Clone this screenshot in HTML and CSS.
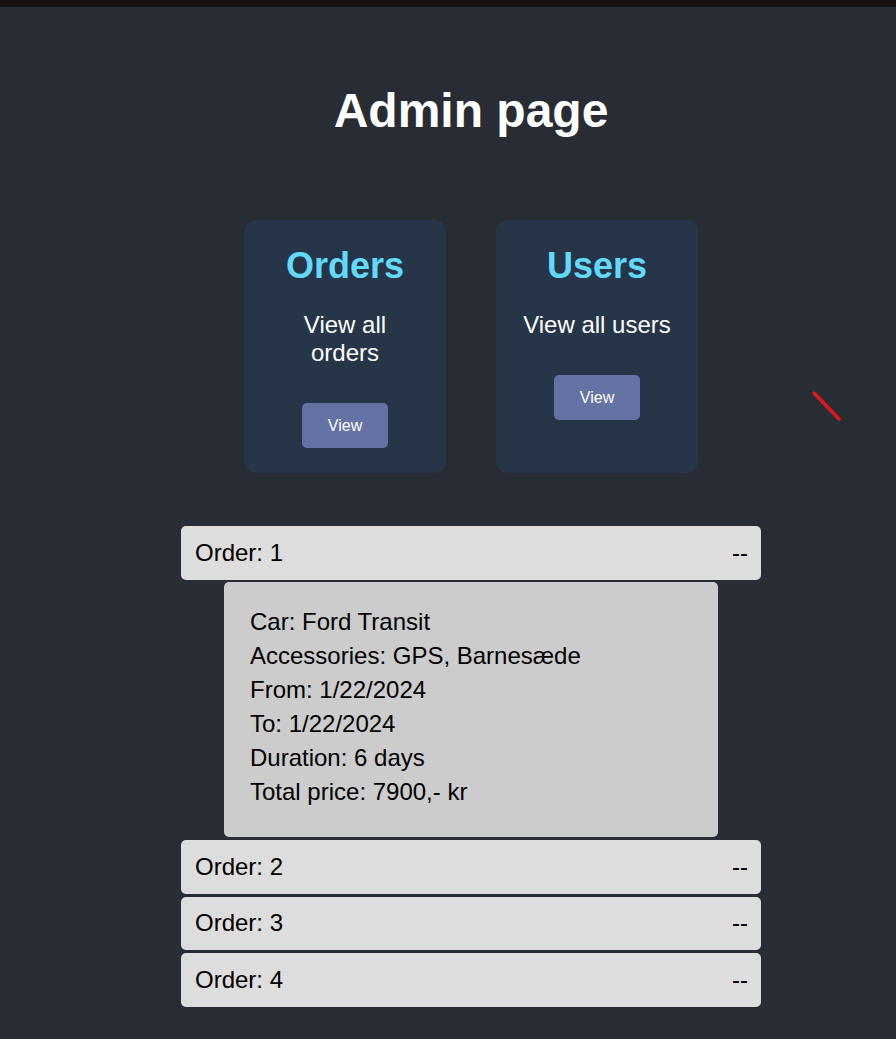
FILE: index.html
```html
<!DOCTYPE html>
<html lang="en">
<head>
<meta charset="utf-8">
<title>Admin page</title>
<link rel="stylesheet" href="styles.css">
</head>
<body>
<div class="topbar"></div>
<main class="page">
  <h1 class="title">Admin page</h1>
  <section class="cards">
    <div class="card">
      <h2 class="card-title">Orders</h2>
      <p class="card-text">View all orders</p>
      <button class="btn">View</button>
    </div>
    <div class="card">
      <h2 class="card-title">Users</h2>
      <p class="card-text">View all users</p>
      <button class="btn">View</button>
    </div>
  </section>
  <section class="orders">
    <div class="order-row"><span>Order: 1</span><span>--</span></div>
    <div class="order-details">
      <div>Car: Ford Transit</div>
      <div>Accessories: GPS, Barnesæde</div>
      <div>From: 1/22/2024</div>
      <div>To: 1/22/2024</div>
      <div>Duration: 6 days</div>
      <div>Total price: 7900,- kr</div>
    </div>
    <div class="order-row"><span>Order: 2</span><span>--</span></div>
    <div class="order-row"><span>Order: 3</span><span>--</span></div>
    <div class="order-row"><span>Order: 4</span><span>--</span></div>
  </section>
</main>
<svg class="marker" width="36" height="36" viewBox="0 0 36 36"><line x1="5" y1="5" x2="30" y2="31" stroke="#e01818" stroke-width="3.5" stroke-linecap="round"/></svg>
</body>
</html>
```

FILE: styles.css
```css
html, body {
  margin: 0;
  padding: 0;
  background: #282c34;
  font-family: "Liberation Sans", Arial, sans-serif;
  min-height: 100%;
}
body {
  position: relative;
  overflow: hidden;
}
.topbar {
  height: 7px;
  background: #181212;
}
.page {
  padding-left: 46px;
  display: flex;
  flex-direction: column;
  align-items: center;
}
.title {
  margin: 76px 0 0;
  font-size: 48px;
  line-height: 55px;
  font-weight: bold;
  color: #ffffff;
}
.cards {
  margin-top: 82px;
  display: flex;
  gap: 50px;
}
.card {
  width: 202px;
  box-sizing: border-box;
  padding: 25px 24px 25px;
  background: #273549;
  border-radius: 12px;
  display: flex;
  flex-direction: column;
  align-items: center;
  text-align: center;
}
.card-title {
  margin: 0 0 25px;
  font-size: 36px;
  line-height: 41px;
  font-weight: bold;
  color: #61dafb;
}
.card-text {
  margin: 0 0 36px;
  font-size: 24px;
  line-height: 28px;
  color: #ffffff;
}
.btn {
  font-family: "Liberation Sans", Arial, sans-serif;
  font-size: 16px;
  line-height: 21px;
  color: #ffffff;
  background: #6572a4;
  border: none;
  border-radius: 5px;
  padding: 12px 25px;
  width: 86px;
  height: 45px;
}
.orders {
  margin-top: 53px;
  display: flex;
  flex-direction: column;
  align-items: center;
  gap: 3px;
}
.order-row {
  width: 580px;
  box-sizing: border-box;
  height: 53.6px;
  padding: 0 13px 0 14px;
  display: flex;
  align-items: center;
  justify-content: space-between;
  background: #dddddd;
  border-radius: 5px;
  font-size: 24px;
  color: #000000;
}
.order-details {
  width: 494px;
  box-sizing: border-box;
  margin-top: -1px;
  padding: 23px 26px 28.5px;
  background: #cccccc;
  border-radius: 5px;
  font-size: 24px;
  line-height: 34px;
  color: #000000;
}
.marker {
  position: absolute;
  left: 809px;
  top: 388px;
}
```
